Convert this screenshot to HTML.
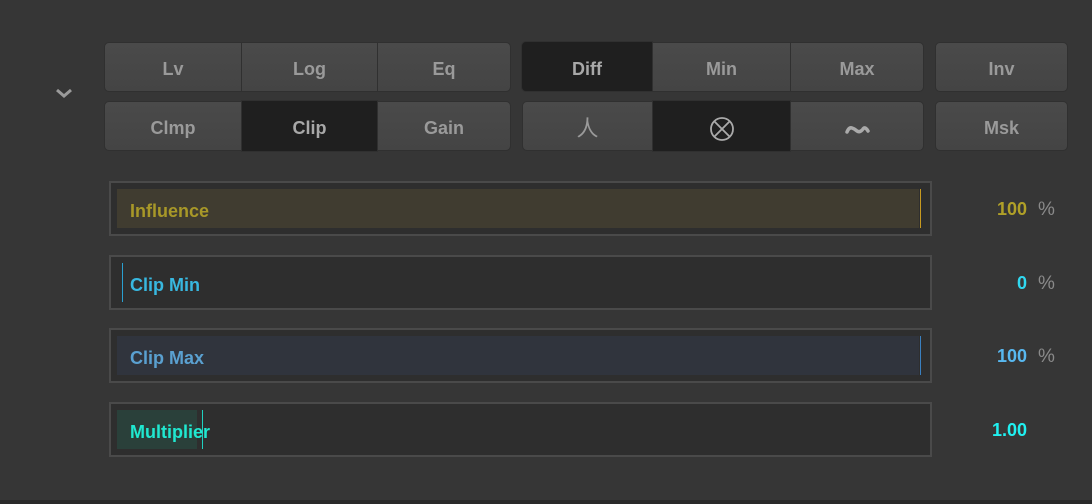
<!DOCTYPE html>
<html><head><style>
*{margin:0;padding:0;box-sizing:border-box}
body{width:1092px;height:504px;background:#363636;font-family:"Liberation Sans","DejaVu Sans",sans-serif;font-weight:bold;position:relative;overflow:hidden}
.b{position:absolute;background:linear-gradient(#4a4a4a,#444);color:#9a9a9a;font-size:18px;display:flex;align-items:center;justify-content:center;border:1px solid #303030;padding-top:5px}
.on{background:#1f1f1f;color:#a8a8a8}
.s{position:absolute;left:109px;width:823px;height:55px;border:2px solid #4a4a4a;background:#2e2e2e}
.f{position:absolute;top:6px;height:39px;left:6px}
.m{position:absolute;top:6px;height:39px;width:1px}
.l{position:absolute;left:19px;top:3px;line-height:51px;font-size:18px}
.v{position:absolute;right:65px;font-size:18px;text-align:right}
.p{position:absolute;left:1038px;font-size:19px;color:#8a8a8a;font-weight:normal}
</style></head><body>
<svg style="position:absolute;left:55px;top:87px" width="18" height="12"><path d="M2 3 L9 9 L16 3" stroke="#9a9a9a" stroke-width="3" fill="none"/></svg>
<div class="b" style="left:104px;top:42px;width:138px;height:50px;border-radius:5px 0 0 5px">Lv</div>
<div class="b" style="left:241px;top:42px;width:137px;height:50px">Log</div>
<div class="b" style="left:377px;top:42px;width:134px;height:50px;border-radius:0 5px 5px 0">Eq</div>
<div class="b on" style="left:521px;top:41px;width:132px;height:51px;border-radius:5px 0 0 5px">Diff</div>
<div class="b" style="left:652px;top:42px;width:139px;height:50px">Min</div>
<div class="b" style="left:790px;top:42px;width:134px;height:50px;border-radius:0 5px 5px 0">Max</div>
<div class="b" style="left:935px;top:42px;width:133px;height:50px;border-radius:5px">Inv</div>
<div class="b" style="left:104px;top:101px;width:138px;height:50px;border-radius:5px 0 0 5px">Clmp</div>
<div class="b on" style="left:241px;top:100px;width:137px;height:52px">Clip</div>
<div class="b" style="left:377px;top:101px;width:134px;height:50px;border-radius:0 5px 5px 0">Gain</div>
<div class="b" style="left:522px;top:101px;width:131px;height:50px;border-radius:5px 0 0 5px;font-weight:normal;font-size:22px;font-family:'Noto Sans CJK SC',sans-serif;padding-top:2px">人</div>
<div class="b on" style="left:652px;top:100px;width:139px;height:52px"><svg width="26" height="26"><circle cx="13" cy="13" r="11" stroke="#aaa" stroke-width="1.8" fill="none"/><path d="M5.5 5.5L20.5 20.5M20.5 5.5L5.5 20.5" stroke="#aaa" stroke-width="1.8"/></svg></div>
<div class="b" style="left:790px;top:101px;width:134px;height:50px;border-radius:0 5px 5px 0"><svg width="26" height="14"><path d="M3 10 Q5 5 8 6 Q11 7 13 9 Q16 11 19 7 Q21 4 24 9" stroke="#aaa" stroke-width="3.5" fill="none" stroke-linecap="round"/></svg></div>
<div class="b" style="left:935px;top:101px;width:133px;height:50px;border-radius:5px">Msk</div>

<div class="s" style="top:181px"><div class="f" style="width:802px;background:#403c30"></div><div class="m" style="left:809px;background:#c89a20"></div><div class="l" style="color:#a89828">Influence</div></div>
<div class="v" style="top:199px;right:65px;color:#b0a028">100</div><div class="p" style="top:199px">%</div>

<div class="s" style="top:255px"><div class="m" style="left:11px;background:#2aa0d0"></div><div class="l" style="color:#38b8e0">Clip Min</div></div>
<div class="v" style="top:273px;color:#30d8f0">0</div><div class="p" style="top:273px">%</div>

<div class="s" style="top:328px"><div class="f" style="width:802px;background:#30343d"></div><div class="m" style="left:809px;background:#3a80c0"></div><div class="l" style="color:#5aa0d0">Clip Max</div></div>
<div class="v" style="top:346px;color:#58b8f0">100</div><div class="p" style="top:346px">%</div>

<div class="s" style="top:402px"><div class="f" style="width:80px;background:#2a403a"></div><div class="m" style="left:91px;background:#20d0c0"></div><div class="l" style="color:#20e8d0">Multiplier</div></div>
<div class="v" style="top:420px;color:#20f0f0">1.00</div>
<div style="position:absolute;left:0;top:500px;width:1092px;height:4px;background:#2a2a2a"></div>
</body></html>
